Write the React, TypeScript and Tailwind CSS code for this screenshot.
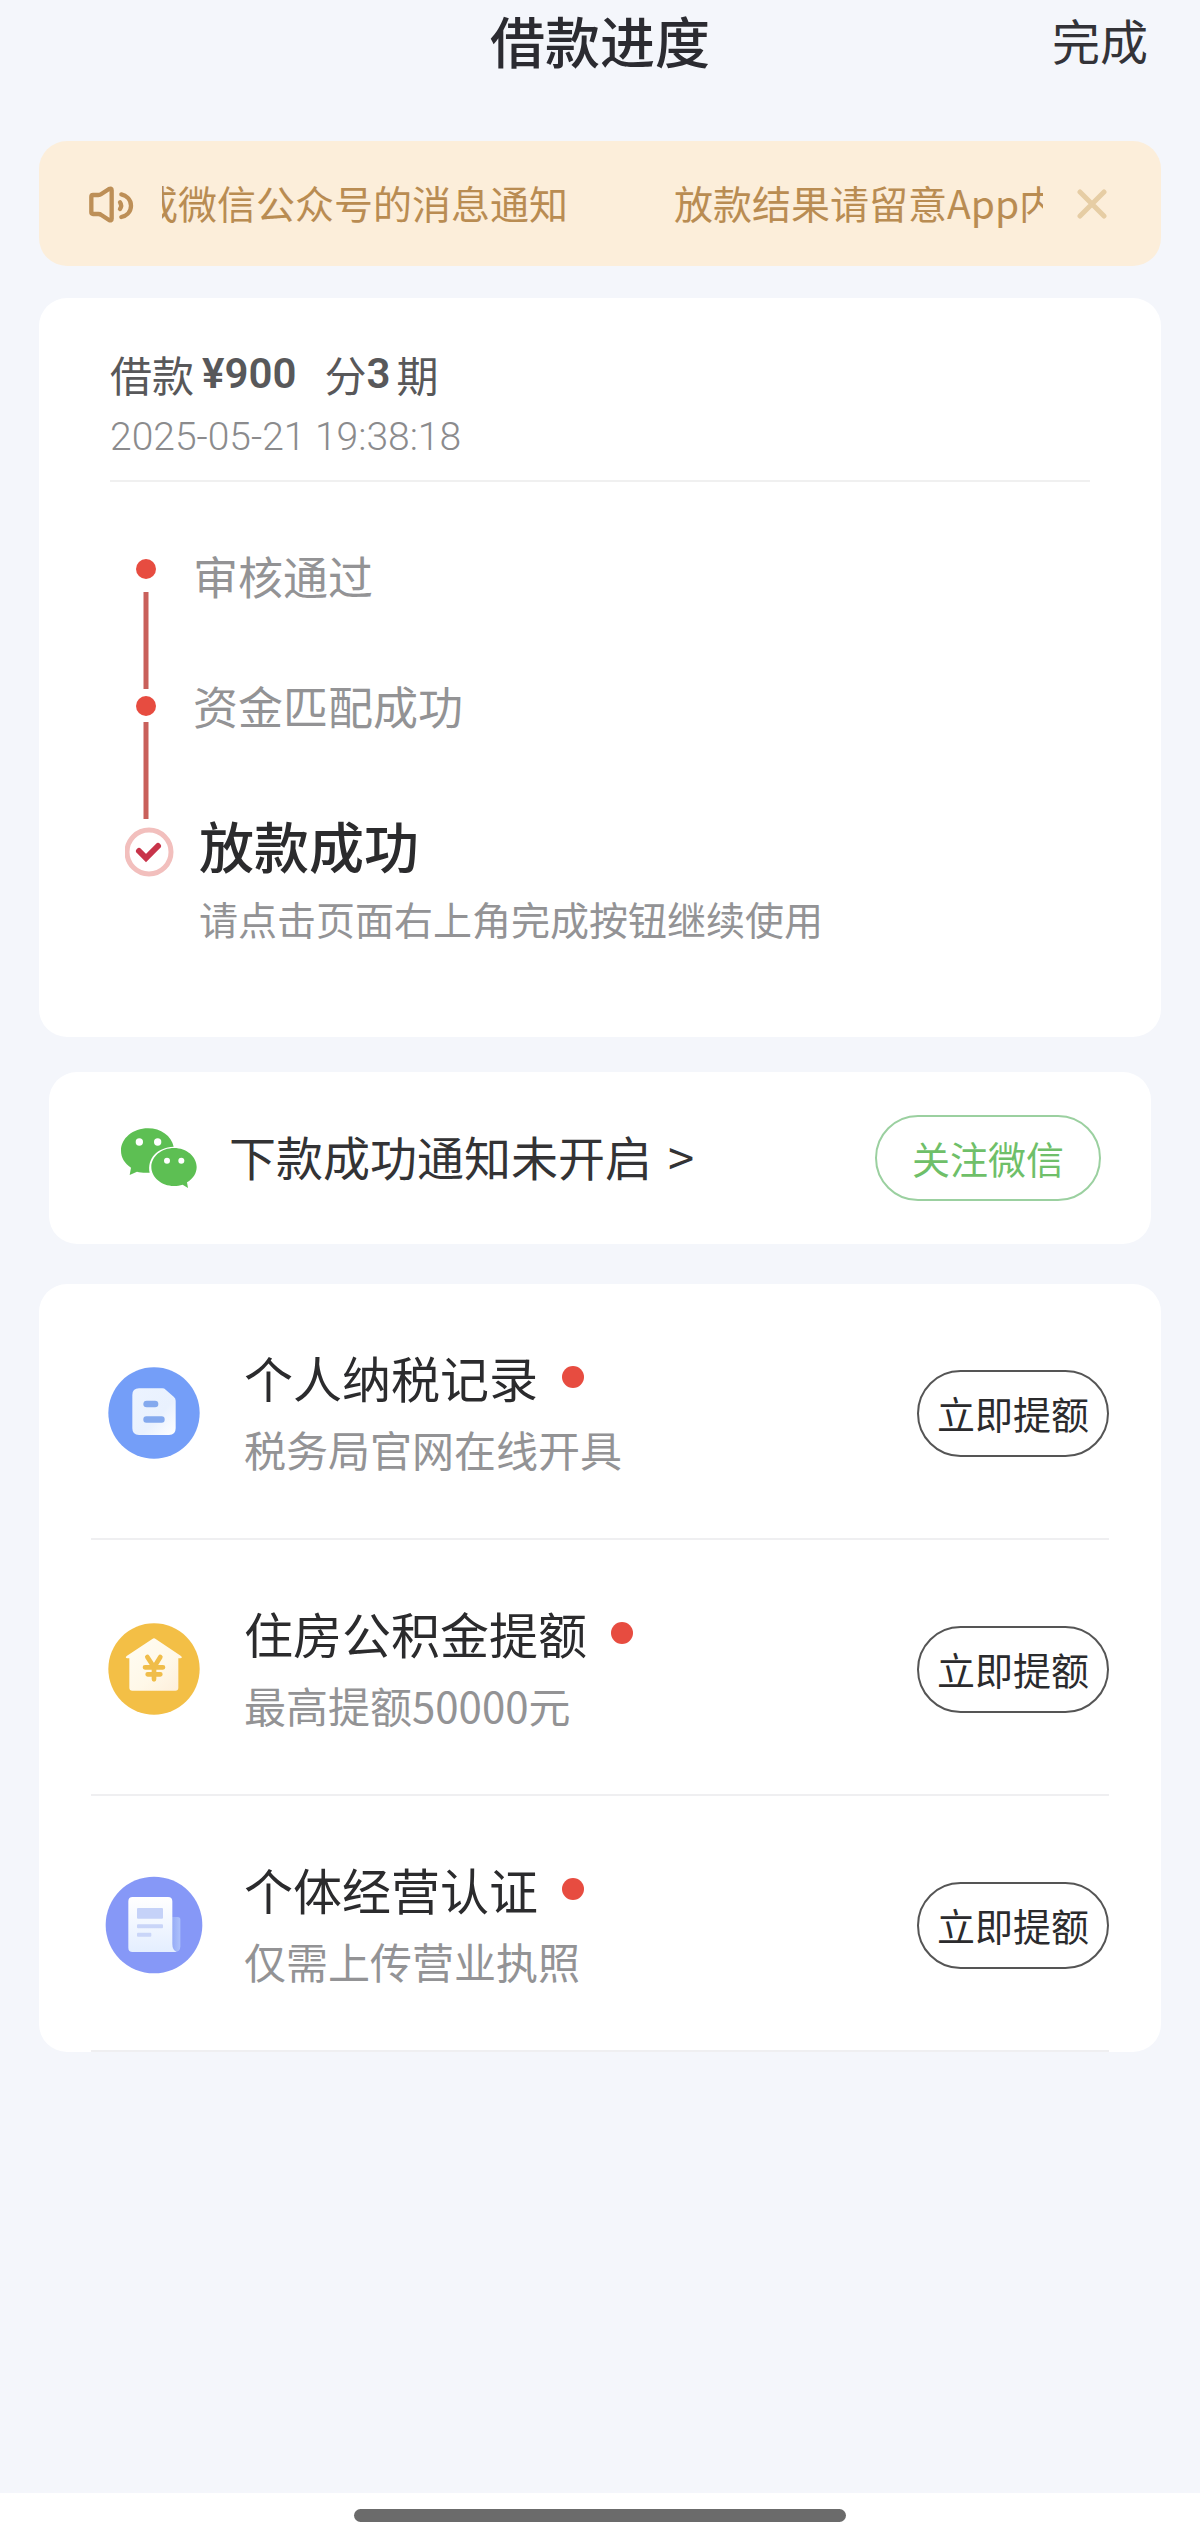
import type { ReactNode } from "react";

interface Offer {
  title: string;
  desc: string;
  icon: ReactNode;
}

function SpeakerIcon() {
  return (
    <svg width="46" height="40" viewBox="60 62 138 120" fill="none" stroke="#bd8f57" strokeWidth="13" strokeLinecap="round" strokeLinejoin="round" aria-hidden="true">
      <path d="M72 95h16q5 0 9-3l23-15q8-4 8 4v85q0 8-8 4l-23-15q-4-3-9-3H72q-5 0-5-5v-47q0-5 5-5z" />
      <path d="M153 117q7 10 0 20" />
      <path d="M157 93c12 3 29 13 29 34s-17 31-29 34" />
    </svg>
  );
}

function WechatIcon() {
  return (
    <svg width="76" height="60" viewBox="123 110 228 180" aria-hidden="true">
      <path fill="#5dbf53" d="M204 111c-45 0-81 30-81 67 0 21 11 38 30 51l-4 22 22-10c10 3 22 4 38 3-8-42 22-76 72-78-7-32-38-55-77-55z" />
      <path fill="#5dbf53" d="M282 170c-38 0-68 26-68 57s30 57 68 57c9 0 18-2 26-4l16 10-3-17c18-11 29-27 29-46 0-31-30-57-68-57z" />
      <circle cx="178" cy="152" r="11" fill="#fff" />
      <circle cx="233" cy="152" r="11" fill="#fff" />
      <circle cx="261" cy="208" r="9" fill="#fff" />
      <circle cx="304" cy="208" r="9" fill="#fff" />
    </svg>
  );
}

function TaxIcon() {
  return (
    <svg width="92" height="92" viewBox="85 79 276 276" aria-hidden="true">
      <defs>
        <linearGradient id="tax-doc" x1="0" y1="0" x2="1" y2="1">
          <stop offset="0" stopColor="#ecf3ff" />
          <stop offset="0.6" stopColor="#e9f1fe" />
          <stop offset="1" stopColor="#ffffff" />
        </linearGradient>
      </defs>
      <circle cx="223" cy="217" r="137" fill="#749ef8" />
      <path fill="url(#tax-doc)" d="M178 143h70q6 0 10 4l24 21q6 5 6 12v83q0 20-20 20h-90q-20 0-20-20V163q0-20 20-20z" />
      <rect x="191" y="180" width="45" height="20" rx="10" fill="#84a9ee" />
      <rect x="191" y="227" width="64" height="19" rx="9" fill="#84a9ee" />
    </svg>
  );
}

function HouseIcon() {
  return (
    <svg width="92" height="92" viewBox="85 67 276 276" aria-hidden="true">
      <defs>
        <linearGradient id="house" x1="0" y1="0" x2="1" y2="1">
          <stop offset="0" stopColor="#fffdf4" />
          <stop offset="0.6" stopColor="#fff8e8" />
          <stop offset="1" stopColor="#fdeeda" />
        </linearGradient>
      </defs>
      <circle cx="223" cy="205" r="137" fill="#f3bf46" />
      <path fill="url(#house)" d="M218 115q5-4 10 0l76 51q6 6-2 7h-6v88q0 9-9 9H158q-9 0-9-9v-88h-6q-8-1-2-7z" />
      <path d="M203 169l20 31 19-31M196 200h54M204 221h38M223 202v34" fill="none" stroke="#f0bd49" strokeWidth="14" strokeLinecap="round" strokeLinejoin="round" />
    </svg>
  );
}

function LicenseIcon() {
  return (
    <svg width="98" height="98" viewBox="76 74 294 294" aria-hidden="true">
      <defs>
        <linearGradient id="license" x1="0" y1="0" x2="0" y2="1">
          <stop offset="0" stopColor="#ffffff" />
          <stop offset="1" stopColor="#e4eeff" />
        </linearGradient>
        <linearGradient id="license-fold" x1="0" y1="0" x2="1" y2="0">
          <stop offset="0" stopColor="#8fa5f5" />
          <stop offset="1" stopColor="#adc1fb" />
        </linearGradient>
      </defs>
      <circle cx="223" cy="221" r="145" fill="#8698f7" />
      <path fill="url(#license-fold)" d="M270 197h24q8 0 8 8v80q0 17-16 17h-16z" />
      <path fill="url(#license)" d="M159 137h106q13 0 13 13v128q0 18 13 24H159q-13 0-13-13V150q0-13 13-13z" />
      <rect x="172" y="170" width="78" height="32" rx="3" fill="#c5d2f8" />
      <rect x="172" y="219" width="78" height="12" rx="3" fill="#c9d5f8" />
      <rect x="172" y="244" width="43" height="12" rx="3" fill="#c9d5f8" />
    </svg>
  );
}

const offers: Offer[] = [
  { title: "个人纳税记录", desc: "税务局官网在线开具", icon: <TaxIcon /> },
  { title: "住房公积金提额", desc: "最高提额50000元", icon: <HouseIcon /> },
  { title: "个体经营认证", desc: "仅需上传营业执照", icon: <LicenseIcon /> },
];

function Header() {
  return (
    <header className="grid grid-cols-3 items-center h-[78px] px-[52px]">
      <h1 className="col-start-2 text-center text-[55px] leading-[78px] font-medium text-[#2b2b31]">借款进度</h1>
      <button type="button" className="justify-self-end text-[48px] leading-[78px] text-[#333338]">完成</button>
    </header>
  );
}

function Notice() {
  return (
    <div className="flex items-center h-[125px] mt-[63px] pl-[50px] pr-[54px] rounded-[28px] bg-[#fceeda] text-[#b98c52]">
      <SpeakerIcon />
      {/* marquee caught mid-scroll: the first copy runs off the left edge */}
      <div className="flex-1 min-w-0 ml-[27px] mr-[34px] pb-1 overflow-hidden flex justify-start gap-[106px] text-[39px] leading-[60px] whitespace-nowrap">
        <div className="w-[406px] shrink-0 overflow-hidden flex justify-end">
          <span>放款结果请留意App内或微信公众号的消息通知</span>
        </div>
        <span>放款结果请留意App内或微信公众号的消息通知</span>
      </div>
      <button type="button" aria-label="关闭">
        <svg width="30" height="30" viewBox="0 0 30 30" fill="none" stroke="#e6cda4" strokeWidth="5" strokeLinecap="round" aria-hidden="true">
          <path d="M3 3l24 24M27 3L3 27" />
        </svg>
      </button>
    </div>
  );
}

function Progress() {
  return (
    <section className="mt-[32px] px-[71px] pt-[44px] pb-[87px] rounded-[28px] bg-white">
      <div className="border-b-2 border-[#f0f0f0] pb-[12px] text-[#58585a]">
        <p className="flex items-center text-[42px] leading-[64px]">
          <span>借款</span>
          <span className="ml-[8px] font-semibold font-[Roboto]">¥900</span>
          <span className="ml-[28px]">分</span>
          <span className="font-semibold font-[Roboto]">3</span>
          <span className="ml-[6px]">期</span>
        </p>
        <p className="text-[39px] leading-[62px] font-light font-[Roboto] text-[#8b8b8d]">2025-05-21 19:38:18</p>
      </div>

      <div className="flex pt-[62px]">
        <svg width="50" height="350" viewBox="0 0 50 350" className="shrink-0 ml-[15px]" fill="none" aria-hidden="true">
          <circle cx="21" cy="25" r="10" fill="#e74c40" />
          <path d="M21 48v97M21 178v97" stroke="#c9605b" strokeWidth="5" />
          <circle cx="21" cy="162" r="10" fill="#e74c40" />
          <circle cx="24" cy="308" r="22" stroke="#f2bfbd" strokeWidth="5" />
          <path d="M14 307l7 7 12-12" stroke="#c8344a" strokeWidth="6" strokeLinecap="round" />
        </svg>
        <ol className="ml-[18px] text-[#939395]">
          <li className="text-[45px] leading-[64px]">审核通过</li>
          <li className="mt-[66px] text-[45px] leading-[64px]">资金匹配成功</li>
          <li className="mt-[64px] ml-[6px]">
            <p className="text-[55px] leading-[84px] font-medium text-[#2b2b2d]">放款成功</p>
            <p className="text-[39px] leading-[64px]">请点击页面右上角完成按钮继续使用</p>
          </li>
        </ol>
      </div>
    </section>
  );
}

function WechatCard() {
  return (
    <section className="flex items-center h-[172px] mx-[10px] mt-[35px] pl-[72px] pr-[50px] rounded-[28px] bg-white">
      <WechatIcon />
      <a href="#wechat" className="flex gap-4 ml-[32px] pb-1 text-[47px] leading-[68px] text-[#333335]">
        下款成功通知未开启 <span>&gt;</span>
      </a>
      <button type="button" className="ml-auto h-[86px] px-[35px] pb-[2px] rounded-full border-2 border-[#9bd0a0] text-[38px] text-[#6fbf69]">关注微信</button>
    </section>
  );
}

function OfferRow({ title, desc, icon }: Offer) {
  return (
    <li className="flex items-center h-[256px] pt-[4px] border-b-2 border-[#efeff1]">
      <div className="w-[126px] shrink-0 flex justify-center">{icon}</div>
      <div className="ml-[27px]">
        <p className="flex items-center text-[49px] leading-[72px] text-[#2b2b2d]">
          {title}
          <span className="ml-[24px] size-[22px] rounded-full bg-[#e74c40]" />
        </p>
        <p className="text-[42px] leading-[72px] text-[#939395]">{desc}</p>
      </div>
      <button type="button" className="ml-auto h-[87px] px-[18px] pb-[2px] rounded-full border-2 border-[#555] text-[38px] text-[#2b2b2d]">立即提额</button>
    </li>
  );
}

export default function App() {
  return (
    <div className="min-h-screen flex flex-col bg-[#f4f6fb] font-['Noto_Sans_CJK_SC',sans-serif]">
      <Header />
      <main className="flex-1 px-[39px]">
        <Notice />
        <Progress />
        <WechatCard />
        <ul className="mt-[40px] px-[52px] rounded-[28px] bg-white">
          {offers.map((offer) => (
            <OfferRow key={offer.title} {...offer} />
          ))}
        </ul>
      </main>
      <footer className="flex justify-center h-[52px] pt-4 bg-white">
        <div className="w-[41%] h-[13px] rounded-full bg-[#6b6b6b]" />
      </footer>
    </div>
  );
}
